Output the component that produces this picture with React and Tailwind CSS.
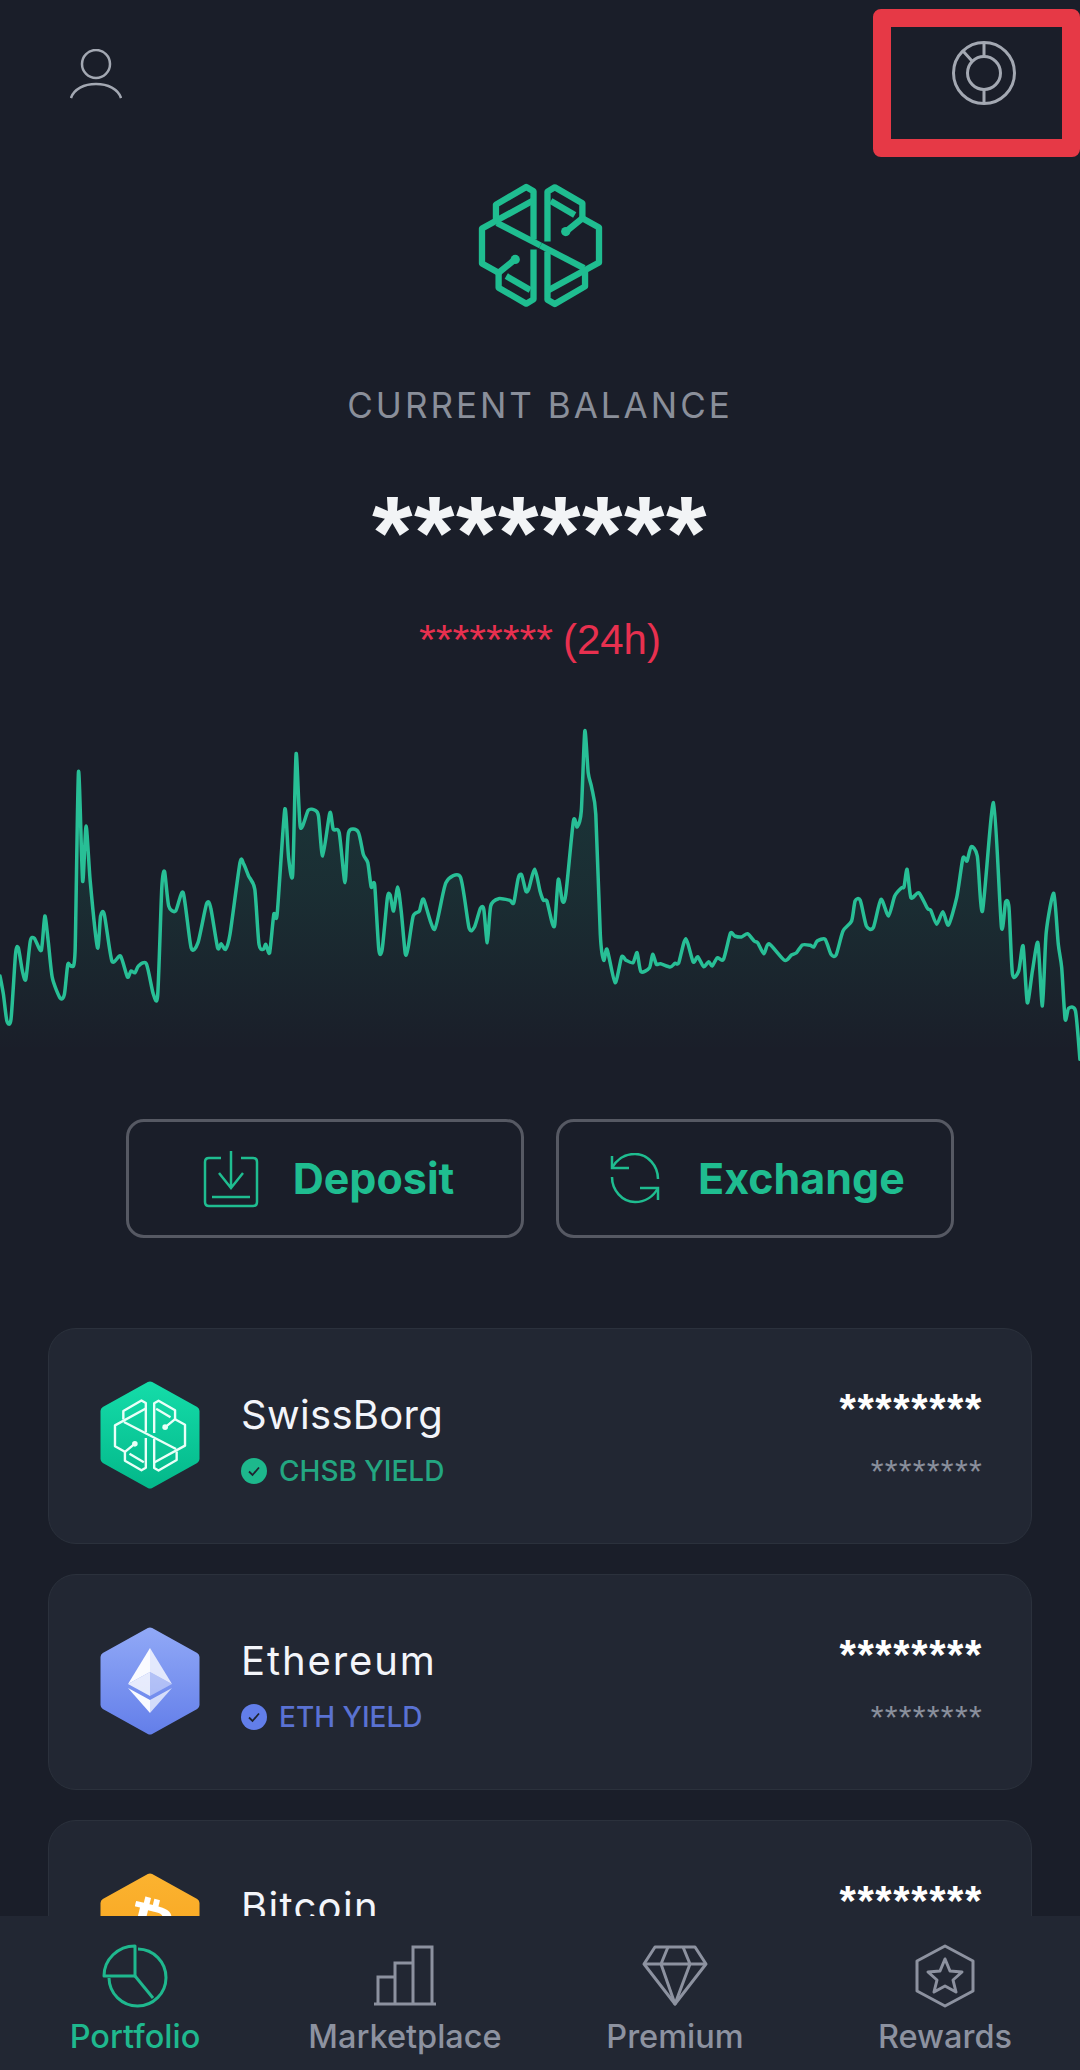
import React from "react";

const L = [[0,825],[10,880],[20,960],[32,955],[45,760],[53,740],[65,810],[75,835],[88,720],[100,712],[120,748],[130,645],[140,720],[152,830],[175,892],[187,880],[197,790],[207,795],[218,750],[228,212],[240,540],[250,375],[262,540],[283,740],[292,645],[303,640],[325,780],[350,765],[370,828],[380,810],[392,815],[402,795],[425,788],[445,878],[458,882],[470,560],[478,512],[490,615],[510,630],[532,575],[555,740],[575,725],[600,608],[612,620],[632,740],[642,728],[655,745],[668,700],[697,485],[708,490],[722,525],[740,565],[752,730],[765,745],[772,730],[783,755],[795,640],[805,638],[827,325],[838,470],[850,520],[860,158],[872,378],[895,328],[915,328],[925,345],[937,465],[958,335],[968,385],[985,395],[1002,545],[1012,395],[1040,392],[1055,460],[1068,485],[1078,558],[1088,552],[1100,745],[1110,745],[1125,590],[1133,582],[1143,630],[1155,558],[1165,630],[1177,758],[1185,740],[1200,645],[1218,630],[1230,595],[1262,685],[1295,545],[1337,528],[1362,680],[1378,678],[1395,622],[1405,625],[1415,725],[1425,615],[1448,593],[1480,598],[1492,605],[1505,530],[1515,522],[1527,570],[1535,565],[1553,505]];
const R = [[0,570],[10,598],[20,600],[35,665],[43,670],[53,535],[65,600],[75,580],[97,360],[108,378],[120,330],[130,90],[140,215],[150,260],[162,340],[175,700],[185,778],[195,745],[218,845],[237,768],[250,778],[270,785],[282,755],[293,812],[318,800],[327,760],[338,790],[350,788],[378,798],[392,787],[403,785],[423,713],[445,783],[458,767],[475,797],[490,782],[500,795],[515,770],[533,775],[553,697],[565,705],[585,708],[603,698],[622,720],[632,725],[650,758],[665,728],[710,778],[730,762],[745,755],[762,732],[785,733],[795,738],[805,720],[828,715],[845,760],[860,762],[880,690],[905,660],[915,600],[930,598],[948,675],[968,680],[990,595],[1012,645],[1030,585],[1050,560],[1057,558],[1066,505],[1077,590],[1100,575],[1125,622],[1135,628],[1152,670],[1170,632],[1186,672],[1210,590],[1228,472],[1240,480],[1252,437],[1270,465],[1285,630],[1317,305],[1340,677],[1352,603],[1362,620],[1372,820],[1390,810],[1403,735],[1415,905],[1430,810],[1446,725],[1459,915],[1470,695],[1492,577],[1505,730],[1515,800],[1525,955],[1535,922],[1555,930],[1568,1075]];
const pts = [
  ...L.map(([x, y]) => [x / 2.904, y / 3]),
  ...R.map(([x, y]) => [540 + x / 2.904, y / 3]),
];

function smooth(p) {
  const k = 0.7 / 6;
  let d = `M${p[0][0].toFixed(1)} ${p[0][1].toFixed(1)}`;
  for (let i = 0; i < p.length - 1; i++) {
    const a = p[Math.max(i - 1, 0)];
    const b = p[i];
    const c = p[i + 1];
    const e = p[Math.min(i + 2, p.length - 1)];
    const c1x = b[0] + (c[0] - a[0]) * k;
    const c1y = b[1] + (c[1] - a[1]) * k;
    const c2x = c[0] - (e[0] - b[0]) * k;
    const c2y = c[1] - (e[1] - b[1]) * k;
    d += `C${c1x.toFixed(1)} ${c1y.toFixed(1)} ${c2x.toFixed(1)} ${c2y.toFixed(1)} ${c[0].toFixed(1)} ${c[1].toFixed(1)}`;
  }
  return d;
}
const line = smooth(pts);
const area = `${line}L1080 370L0 370Z`;

function BrainHalf() {
  return (
    <>
      <path d="M310 240V95L288 82L197 135V178" />
      <path d="M310 122L155 207V312L205 340L254 300" />
      <path d="M205 340V385L288 433L310 420V270" />
      <path d="M228 350L300 392" />
      <path d="M200 190L331 258" />
      <circle cx="255" cy="300" r="14" fill="currentColor" stroke="none" />
    </>
  );
}

function Brain({ className, sw = 19 }) {
  return (
    <svg viewBox="140 70 382 376" className={className} fill="none" stroke="currentColor" strokeWidth={sw} strokeLinejoin="round" strokeLinecap="butt">
      <BrainHalf />
      <g transform="rotate(180 331 258)">
        <BrainHalf />
      </g>
    </svg>
  );
}

function Hex({ id, from, to, children }) {
  return (
    <svg viewBox="0 0 100 108" className="w-[100px] h-[108px] shrink-0 block">
      <defs>
        <linearGradient id={id} x1="0" y1="0" x2="0" y2="1">
          <stop offset="0" stopColor={from} />
          <stop offset="1" stopColor={to} />
        </linearGradient>
      </defs>
      <polygon points="50,5 95,30 95,78 50,103 5,78 5,30" fill={`url(#${id})`} stroke={`url(#${id})`} strokeWidth="9" strokeLinejoin="round" />
      {children}
    </svg>
  );
}

function SwissHex() {
  return (
    <div className="relative w-[100px] h-[108px] shrink-0">
      <Hex id="swiss" from="#14dba8" to="#04b98b" />
      <div className="absolute inset-0 flex items-center justify-center text-[#eafff8]">
        <Brain className="w-[76px] h-[75px]" sw={12} />
      </div>
    </div>
  );
}

function EthHex() {
  return (
    <Hex id="eth" from="#8fa7f6" to="#6580ea">
      <polygon points="50,21 28,57 50,45" fill="#fff" fillOpacity="0.96" />
      <polygon points="50,21 72,57 50,45" fill="#fff" fillOpacity="0.78" />
      <polygon points="28,57 50,45 50,69" fill="#fff" fillOpacity="0.82" />
      <polygon points="72,57 50,45 50,69" fill="#fff" fillOpacity="0.42" />
      <polygon points="28,61 50,73 50,86" fill="#fff" fillOpacity="0.96" />
      <polygon points="72,61 50,73 50,86" fill="#fff" fillOpacity="0.7" />
    </Hex>
  );
}

function BtcHex() {
  return (
    <Hex id="btc" from="#fbb22f" to="#f7a21c">
      <text x="50" y="72" textAnchor="middle" fontSize="58" fontWeight="700" fill="#fff" fontFamily="DejaVu Sans, sans-serif" transform="rotate(14 50 54)">₿</text>
    </Hex>
  );
}

function Badge({ color }) {
  return (
    <svg viewBox="0 0 26 26" className="w-[26px] h-[26px] shrink-0">
      <circle cx="13" cy="13" r="13" fill={color} />
      <path d="M8 13.5L11.5 17L18 9.5" fill="none" stroke="#1f2531" strokeWidth="1.8" />
    </svg>
  );
}

function Card({ icon, name, nameClass, tag, tagClass, badge }) {
  return (
    <div className="h-[216px] shrink-0 rounded-[28px] border border-[#2b313c] bg-[#222733] pl-[51px] pr-[48px] pt-[52px] flex items-start">
      {icon}
      <div className="ml-[41px] mt-[9px]">
        <div className={`h-[50px] leading-[50px] text-[40px] text-[#f3f5fa] ${nameClass}`}>{name}</div>
        <div className="mt-[13px] h-[36px] flex items-center gap-[12px]">
          <Badge color={badge} />
          <span className={`text-[28px] font-medium ${tagClass}`}>{tag}</span>
        </div>
      </div>
      <div className="ml-auto text-right font-['Liberation_Sans',sans-serif]">
        <div className="mt-[10px] h-[36px] leading-[36px] text-[42px] font-bold text-white tracking-[1.6px]">********</div>
        <div className="mt-[30px] h-[30px] leading-[30px] text-[33px] text-[#8a8f9c] tracking-[1.2px]">********</div>
      </div>
    </div>
  );
}

function NavItem({ label, active, children }) {
  return (
    <div className="flex-1 flex flex-col items-center">
      {children}
      <div className={`mt-[9px] h-[40px] leading-[40px] text-[32.5px] font-medium ${active ? "text-[#1fb88e]" : "text-[#8d92a0]"}`}>{label}</div>
    </div>
  );
}

const navSvg = (cx) => `${cx - 40} 1944 80 64`;

export default function App() {
  return (
    <div className="relative w-[1080px] h-[2070px] bg-[#1a1e29] overflow-hidden flex flex-col font-[Inter,sans-serif]">
      <div className="flex-1 min-h-0 overflow-hidden">
        <div className="flex justify-between items-start pt-[41px] pl-[70px] pr-[64px]">
          <svg viewBox="0 0 52 50" className="w-[52px] h-[50px] mt-[8px]" fill="none" stroke="#a3a8b2" strokeWidth="2.5">
            <circle cx="26" cy="15" r="14" />
            <path d="M1 49C4 40 14 35 26 35C38 35 48 40 51 49" />
          </svg>
          <svg viewBox="0 0 64 64" className="w-[64px] h-[64px]" fill="none" stroke="#a3a8b2" strokeWidth="3">
            <circle cx="32" cy="32" r="30.5" />
            <circle cx="32" cy="32" r="16.5" />
            <path d="M32 2V15M32 49V62M11 10L20 20" />
          </svg>
        </div>

        <div className="mt-[78px] flex justify-center text-[#1fbd90]">
          <Brain className="w-[127px] h-[125px]" />
        </div>

        <div className="mt-[75px] h-[44px] leading-[44px] text-center text-[#8a8f9a] text-[35px] tracking-[3px]">CURRENT BALANCE</div>

        <div className="mt-[70px] h-[72px] leading-[72px] text-center text-[#f2f4f6] text-[104px] font-bold tracking-[1.5px] font-['Liberation_Sans',sans-serif]">********</div>

        <div className="mt-[45px] h-[50px] flex items-baseline justify-center gap-[10px] text-[#e8304f] font-['Liberation_Sans',sans-serif]">
          <span className="text-[43px] leading-[50px]">********</span>
          <span className="text-[42px] leading-[50px]">(24h)</span>
        </div>

        <svg viewBox="0 0 1080 370" className="block w-[1080px] h-[370px] mt-[37px]">
          <defs>
            <linearGradient id="chartFill" gradientUnits="userSpaceOnUse" x1="0" y1="30" x2="0" y2="350">
              <stop offset="0" stopColor="#1fbd90" stopOpacity="0.16" />
              <stop offset="0.5" stopColor="#1fbd90" stopOpacity="0.1" />
              <stop offset="1" stopColor="#1fbd90" stopOpacity="0" />
            </linearGradient>
          </defs>
          <path d={area} fill="url(#chartFill)" />
          <path d={line} fill="none" stroke="#28bf96" strokeWidth="3.5" strokeLinejoin="round" strokeLinecap="round" />
        </svg>

        <div className="mt-[48px] flex justify-center gap-[32px]">
          <div className="w-[398px] h-[119px] rounded-[18px] border-[3px] border-[#565963] pl-[7px] flex items-center justify-center gap-[34px] text-[#1fbd90]">
            <svg viewBox="0 0 56 58" className="w-[56px] h-[58px]" fill="none" stroke="currentColor" strokeWidth="2.5">
              <path d="M18 8H6Q2 8 2 12V52Q2 56 6 56H50Q54 56 54 52V12Q54 8 50 8H38" />
              <path d="M28 1V38M16 23L28 38L40 23M9 47H47" />
            </svg>
            <span className="text-[43px] font-bold">Deposit</span>
          </div>
          <div className="w-[398px] h-[119px] rounded-[18px] border-[3px] border-[#565963] pl-[4px] flex items-center justify-center gap-[37px] text-[#1fbd90]">
            <svg viewBox="0 0 52 52" className="w-[52px] h-[52px]" fill="none" stroke="currentColor" strokeWidth="2.5">
              <path d="M3 15C8 6 16 1 26 1C39 1 49 13 49 26" />
              <path d="M3 3V15H20" />
              <path d="M3 24C3 37 13 49 26 49C36 49 44 44 49 35" />
              <path d="M49 47V35H31" />
            </svg>
            <span className="text-[43px] font-bold">Exchange</span>
          </div>
        </div>

        <div className="mt-[90px] mx-[48px] flex flex-col gap-[30px]">
          <Card icon={<SwissHex />} name="SwissBorg" nameClass="tracking-[0.3px]" tag="CHSB YIELD" tagClass="text-[#23a681]" badge="#1db88c" />
          <Card icon={<EthHex />} name="Ethereum" nameClass="tracking-[1.9px]" tag="ETH YIELD" tagClass="text-[#5a72d2]" badge="#627eea" />
          <Card icon={<BtcHex />} name="Bitcoin" nameClass="tracking-[1.3px]" tag="BTC YIELD" tagClass="text-[#f7a21c]" badge="#f7a21c" />
        </div>
      </div>

      <div className="h-[154px] shrink-0 bg-[#222733] flex pt-[28px]">
        <NavItem label="Portfolio" active>
          <svg viewBox={navSvg(135)} className="w-[80px] h-[64px]" fill="none" stroke="#1fb88e" strokeWidth="3" strokeLinejoin="round">
            <path d="M135 1946A31 30 0 0 0 104 1976H135Z" />
            <path d="M138 1949A28.5 28.5 0 1 1 109 1978" />
            <path d="M135 1976L153 1998" />
          </svg>
        </NavItem>
        <NavItem label="Marketplace">
          <svg viewBox={navSvg(405)} className="w-[80px] h-[64px]" fill="none" stroke="#8d92a0" strokeWidth="3">
            <path d="M378 2004V1977H395M395 2004V1963H413M413 2004V1947H432V2004M374 2004H436" />
          </svg>
        </NavItem>
        <NavItem label="Premium">
          <svg viewBox={navSvg(675)} className="w-[80px] h-[64px]" fill="none" stroke="#8d92a0" strokeWidth="3" strokeLinejoin="round">
            <path d="M655 1947H695L706 1964L675 2004L644 1964Z" />
            <path d="M644 1964H706M668 1947L661 1964L675 2004L690 1964L683 1947" />
          </svg>
        </NavItem>
        <NavItem label="Rewards">
          <svg viewBox={navSvg(945)} className="w-[80px] h-[64px]" fill="none" stroke="#8d92a0" strokeWidth="3" strokeLinejoin="round">
            <path d="M945 1946L973 1961V1991L945 2006L917 1991V1961Z" />
            <path d="M945 1959L950 1971L962 1972L953 1980L956 1992L945 1986L934 1992L937 1980L928 1972L940 1971Z" />
          </svg>
        </NavItem>
      </div>

      <div className="absolute left-[873px] top-[9px] w-[207px] h-[148px] border-[18px] border-[#e63946] rounded-[8px]" />
    </div>
  );
}
